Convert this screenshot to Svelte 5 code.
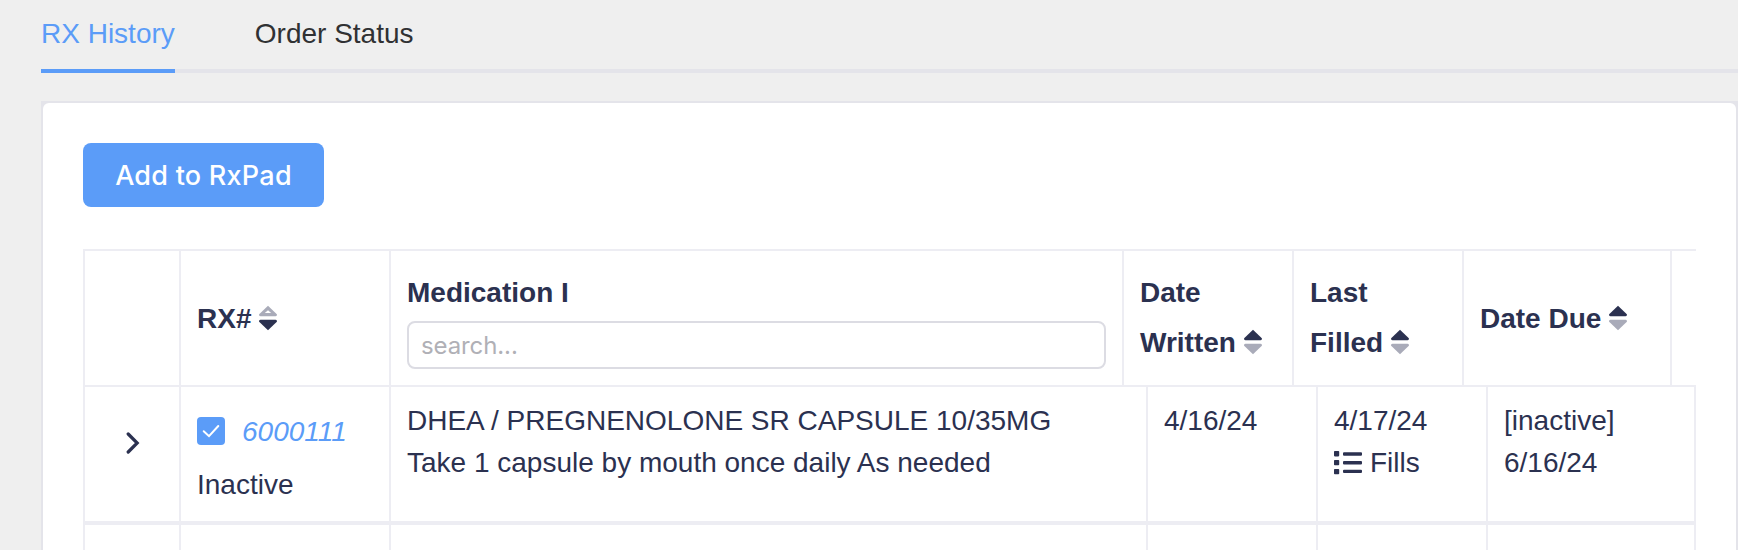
<script>
  const tabs = ['RX History', 'Order Status'];
  let active = $state('RX History');
  let checked = $state(true);
</script>

{#snippet sorter(dir)}
  <svg class="sorter" viewBox="0 0 18 24" width="18" height="24" aria-hidden="true">
    <path class:dim={dir === 'down'} d="M9-.3L17.600 7.900Q18.200 8.600 17.900 9.300Q17.500 10.200 16.500 10.200H1.500Q.5 10.200.1 9.300Q-.2 8.600.4 7.900Z" />
    {#if dir === 'down'}
      <path class="hole" d="M9 4.200L12.200 7.100H5.800Z" />
    {/if}
    <path class:dim={dir === 'up'} d="M9 24.300L17.600 16.100Q18.200 15.400 17.900 14.700Q17.500 13.800 16.500 13.800H1.500Q.5 13.800.1 14.700Q-.2 15.400.4 16.100Z" />
  </svg>
{/snippet}

<div class="page">
  <nav class="tabs">
    {#each tabs as tab}
      <button class="tab" class:active={active === tab} onclick={() => (active = tab)}>{tab}</button>
    {/each}
  </nav>

  <div class="frame">
    <section class="card">
      <button class="add">Add to RxPad</button>

      <div class="table">
        <div class="row head">
          <div class="cell"></div>
          <div class="cell single"><div>RX#{@render sorter('down')}</div></div>
          <div class="cell">
            <div class="label">Medication I</div>
            <input class="search" placeholder="search..." />
          </div>
          <div class="cell"><div>Date<br />Written{@render sorter('up')}</div></div>
          <div class="cell"><div>Last<br />Filled{@render sorter('up')}</div></div>
          <div class="cell single"><div>Date Due{@render sorter('up')}</div></div>
          <div class="cell"></div>
        </div>

        <div class="row">
          <div class="cell expand">
            <svg viewBox="0 0 14 22" width="14" height="22" aria-hidden="true">
              <path d="M2.2 2L11.2 11L2.2 20" />
            </svg>
          </div>
          <div class="cell rx">
            <div class="pick">
              <button class="check" aria-label="Select" onclick={() => (checked = !checked)}>
                {#if checked}
                  <svg viewBox="0 0 28 28" width="28" height="28"><path d="M6.7 14.3L12 19.2L21.3 9" /></svg>
                {/if}
              </button>
              <em>6000111</em>
            </div>
            <div class="state">Inactive</div>
          </div>
          <div class="cell">
            <div>DHEA / PREGNENOLONE SR CAPSULE 10/35MG</div>
            <div>Take 1 capsule by mouth once daily As needed</div>
          </div>
          <div class="cell">4/16/24</div>
          <div class="cell">
            <div>4/17/24</div>
            <div class="fills">
              <svg viewBox="0 0 28 24" width="28" height="24" aria-hidden="true">
                <path d="M.8 0h3.6q.8 0 .8.8v3.8q0 .8-.8.8H.8Q0 5.4 0 4.6V.8Q0 0 .8 0ZM.8 9h3.6q.8 0 .8.8v3.6q0 .8-.8.8H.8Q0 14.200 0 13.400V9.800Q0 9 .8 9ZM.8 17.900h3.600q.8 0 .8.8v3.800q0 .8-.8.8H.8Q0 23.300 0 22.500v-3.800Q0 17.900.8 17.900Z" />
                <path d="M10 1.300h17q1 0 1 1v1.400q0 1-1 1H10q-1 0-1-1V2.300q0-1 1-1ZM10 10h17q1 0 1 1v1.400q0 1-1 1H10q-1 0-1-1V11q0-1 1-1ZM10 18.700h17q1 0 1 1v1.400q0 1-1 1H10q-1 0-1-1v-1.400q0-1 1-1Z" />
              </svg>
              <span>Fills</span>
            </div>
          </div>
          <div class="cell">
            <div>[inactive]</div>
            <div>6/16/24</div>
          </div>
        </div>

        <div class="row">
          {#each Array(6) as _}
            <div class="cell"></div>
          {/each}
        </div>
      </div>
    </section>
  </div>
</div>

<style>
  :global(body) {
    background: #efefef;
  }
  .page {
    box-sizing: border-box;
    height: 550px;
    overflow: hidden;
    padding-left: 41px;
    background: #efefef;
    color: #2b3150;
    font: 28px/42px 'Liberation Sans', Arial, sans-serif;
    white-space: nowrap;
  }
  button {
    font: inherit;
    border: 0;
    padding: 0;
    background: none;
    cursor: pointer;
  }
  .tabs {
    box-sizing: border-box;
    display: flex;
    gap: 80px;
    height: 73px;
    border-bottom: 4px solid #e4e4ea;
  }
  .tab {
    box-sizing: border-box;
    height: 73px;
    padding-top: 13px;
    padding-bottom: 14px;
    color: #303133;
    border-bottom: 4px solid transparent;
  }
  .tab.active {
    color: #5b9cf8;
    border-color: #5b9cf8;
  }
  .frame {
    margin-top: 28px;
    padding: 2px;
    background: #e4e4ea;
  }
  .card {
    box-sizing: border-box;
    height: 600px;
    padding: 40px;
    background: #fff;
    border-radius: 6px;
  }
  .add {
    display: block;
    box-sizing: border-box;
    width: 241px;
    height: 64px;
    padding-top: 1px;
    border-radius: 8px;
    background: #5b9cf8;
    color: #fff;
    font: 500 27px/62px Inter, sans-serif;
    letter-spacing: 0.25px;
  }
  .table {
    margin-top: 42px;
    overflow: hidden;
    border-left: 2px solid #ededf3;
    border-top: 2px solid #ededf3;
  }
  .row {
    display: grid;
    grid-template-columns: 96px 210px 757px 170px 170px 208px;
    height: 138px;
  }
  .row.head {
    height: 136px;
    grid-template-columns: 96px 210px 733px 170px 170px 208px 1fr;
    font-weight: bold;
    line-height: 50px;
  }
  .cell {
    box-sizing: border-box;
    min-width: 0;
    padding: 13px 16px 0;
    border-right: 2px solid #ededf3;
    border-bottom: 4px solid #ededf3;
  }
  .head .cell {
    display: flex;
    flex-direction: column;
    justify-content: center;
    padding: 0 16px;
    border-bottom-width: 2px;
  }
  .head .single {
    padding-top: 2px;
  }
  .head .cell:last-child {
    border-right: 0;
  }
  .label {
    padding-top: 1px;
    margin-bottom: 3px;
    height: 50px;
  }
  .sorter {
    margin-left: 8px;
    vertical-align: -2px;
    overflow: visible;
    fill: #2b3150;
  }
  .dim {
    fill: #a9abb9;
  }
  .hole {
    fill: #fff;
  }
  .search {
    box-sizing: border-box;
    display: block;
    width: 100%;
    height: 48px;
    padding: 0 12px;
    border: 2px solid #dcdce3;
    border-radius: 8px;
    background: #fff;
    font: 24px Inter, sans-serif;
    letter-spacing: -0.1px;
    outline: 0;
  }
  .search::placeholder {
    color: #b0b0b6;
    opacity: 1;
  }
  .cell.expand {
    display: flex;
    align-items: flex-start;
    justify-content: center;
    padding-top: 45px;
  }
  .expand svg {
    margin-left: 2px;
    fill: none;
    stroke: #2b3150;
    stroke-width: 3.2;
    stroke-linecap: round;
  }
  .cell.rx {
    padding-top: 23px;
  }
  .pick {
    display: flex;
    align-items: center;
    gap: 17px;
    height: 42px;
    color: #5b9cf8;
  }
  .pick em {
    padding-top: 2px;
  }
  .check {
    width: 28px;
    height: 28px;
    border-radius: 4px;
    background: #5b9cf8;
  }
  .check svg {
    display: block;
    fill: none;
    stroke: #fff;
    stroke-width: 2;
    stroke-linecap: round;
  }
  .state {
    margin-top: 12px;
  }
  .fills {
    display: flex;
    align-items: center;
    gap: 8px;
  }
  .fills svg {
    margin-top: -1px;
    fill: #2b3150;
  }
</style>
